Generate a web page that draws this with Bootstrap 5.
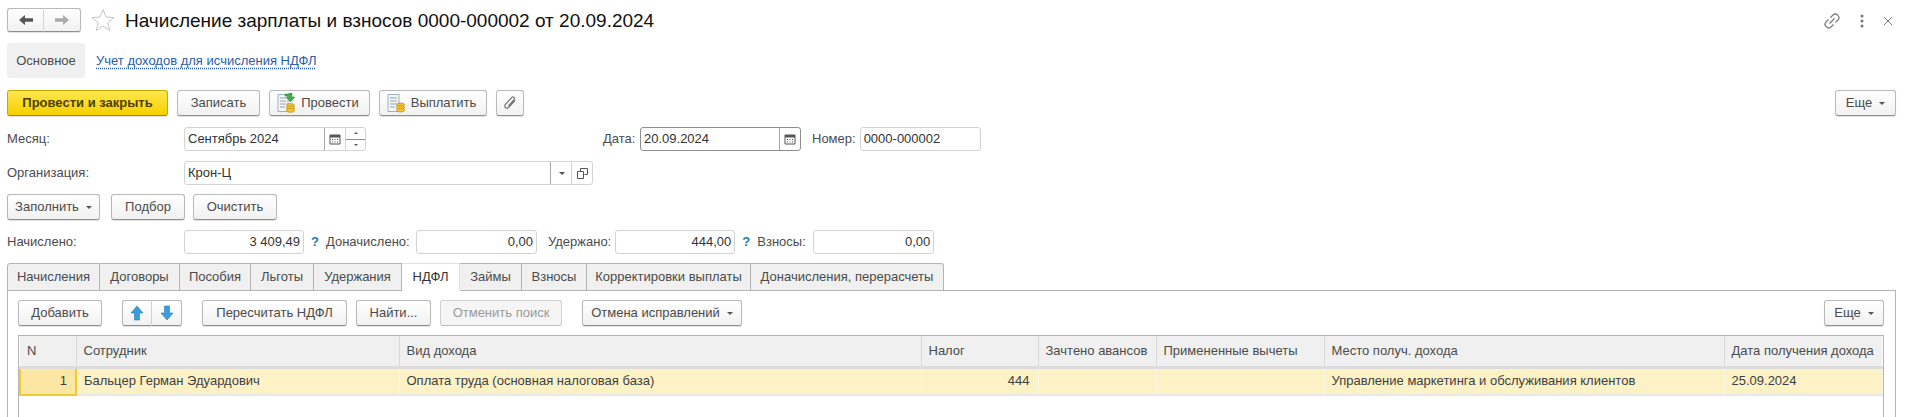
<!DOCTYPE html>
<html lang="ru">
<head>
    <meta charset="UTF-8">
    <title>Начисление зарплаты и взносов</title>
    <link href="https://cdn.jsdelivr.net/npm/bootstrap@5.3.0/dist/css/bootstrap.min.css" rel="stylesheet">
    <style>
        html, body { height: 417px; overflow: hidden; }
        body { background: #fff; color: #4b4b4b; font: 13px/16px "Liberation Sans", Arial, sans-serif; padding: 0 12px 0 7px; }

        /* header */
        .doc-head { height: 43px; padding-top: 8px; align-items: flex-start; }
        .doc-title { font-size: 19px; line-height: 26px; color: #111; margin: 0 0 0 10px; font-weight: 400; }
        .head-tools { margin-left: auto; gap: 19px; padding-top: 4px; margin-right: 3px; }
        .nav-pair { width: 74px; height: 24px; }
        .nav-pair .btn-1c { width: 37px; height: 24px; padding: 0; }
        .nav-pair .btn-1c:first-child { border-radius: 3px 0 0 3px; border-right-color: #d4d4d4; }
        .nav-pair .btn-1c:last-child { border-radius: 0 3px 3px 0; border-left: 0; }
        .star-ico { margin: 0 0 0 10px; }

        /* section links */
        .sect-nav { height: 35px; align-items: center; gap: 11px; }
        .sect-cur { background: #f0f0f0; width: 78px; height: 35px; border-radius: 3px; color: #4b4b4b; text-align: center; line-height: 35px; }
        .sect-link { color: #2a5ea6; text-decoration: underline dotted; text-underline-offset: 3px; }

        /* buttons */
        .btn-1c { --bs-btn-padding-x: 0; --bs-btn-padding-y: 0; --bs-btn-font-size: 13px; --bs-btn-line-height: 16px; --bs-btn-color: #4b4b4b; --bs-btn-border-radius: 3px;
            height: 26px; background: linear-gradient(#fff, #f1f1f1); border: 1px solid #b9b9b9; border-bottom-color: #8e8e8e; box-shadow: 0 1px 1px rgba(0,0,0,.12);
            display: inline-flex; align-items: center; justify-content: center; gap: 6px; flex: none; }
        .btn-1c:disabled { --bs-btn-disabled-color: #9a9a9a; --bs-btn-disabled-border-color: #cfcfcf; opacity: 1; border-bottom-color: #bdbdbd; background: #f5f5f5; box-shadow: none; color: #9a9a9a; }
        .btn-main { background: linear-gradient(#fde74c, #f7cf00); border-color: #c9a800; border-bottom-color: #a58a00; font-weight: 700; color: #4a3f00; }
        .btn-ico { gap: 5px; padding-right: 4px; }
        .caret-1c { width: 0; height: 0; border: 3px solid transparent; border-top: 3px solid #555; border-bottom: 0; margin-left: 1px; }
        .tools-main { margin-top: 12px; gap: 9px; }
        .w-161 { width: 161px; } .w-83 { width: 83px; } .w-101 { width: 101px; } .w-108 { width: 108px; } .w-28 { width: 28px; }
        .w-61 { width: 61px; } .w-93 { width: 93px; } .w-74 { width: 74px; } .w-84 { width: 84px; } .w-60 { width: 60px; }
        .w-145 { width: 145px; } .w-find { width: 75px; } .w-122 { width: 122px; } .w-160 { width: 160px; }
        .ms-auto-1c { margin-left: auto; }
        .ms-11 { margin-left: 11px; }

        /* form rows */
        .form-line { align-items: center; height: 24px; }
        .mt-11 { margin-top: 11px; } .mt-10 { margin-top: 10px; }
        .lbl { flex: none; }
        .lbl-main { width: 177px; }
        .lbl-date { margin-left: 237px; width: 37px; }
        .lbl-add { width: 90px; }
        .lbl-fee { width: 56px; }
        .fld { height: 24px; border: 1px solid #d3d3d3; border-radius: 3px; background: #fff; display: flex; align-items: stretch; flex: none; color: #333; }
        .fld-focus { border-color: #8f8f8f; }
        .fld-text { flex: 1; padding: 3px 3px; line-height: 16px; white-space: nowrap; }
        .fld-num { text-align: right; padding-right: 3px; }
        .fld-btn { width: 21px; border-left: 1px solid #a6a6a6; display: flex; align-items: center; justify-content: center; }
        .fld-btn-soft { border-left-color: #d3d3d3; }
        .fld-spin { width: 20px; border-left: 1px solid #d3d3d3; display: flex; flex-direction: column; }
        .fld-spin span { flex: 1; display: flex; align-items: center; justify-content: center; }
        .fld-spin span:first-child { border-bottom: 1px solid #8f8f8f; }
        .tri-up, .tri-dn { width: 0; height: 0; border: 2px solid transparent; }
        .tri-up { border-bottom: 2px solid #555; border-top: 0; }
        .tri-dn { border-top: 2px solid #555; border-bottom: 0; }
        .hint-q { color: #1f78b4; font-weight: 700; width: 22px; text-align: center; flex: none; }
        .w-182 { width: 182px; } .w-161f { width: 161px; } .w-121 { width: 121px; } .w-409 { width: 409px; } .w-120 { width: 120px; }
        .fill-bar { height: 26px; margin-top: 9px; }
        .fill-last { margin-left: 8px; }

        /* tabs */
        .tabs-1c { margin-top: 9px; height: 28px; border-bottom: 0; flex-wrap: nowrap; position: relative; z-index: 1; }
        .tabs-1c .nav-link { height: 28px; padding: 5px 0 0; text-align: center; color: #4b4b4b; background: #f0f0f0; border: 1px solid #b4b4b4; border-left: 0; border-bottom: 1px solid #b4b4b4; border-radius: 0; margin: 0; font-size: 13px; line-height: 16px; }
        .tabs-1c .nav-item:first-child .nav-link { border-left: 1px solid #b4b4b4; border-top-left-radius: 3px; }
        .tabs-1c .nav-item:last-child .nav-link { border-top-right-radius: 3px; }
        .tabs-1c .nav-link.active { background: #fff; border-bottom-color: #fff; color: #333; }
        .tw-93 { width: 93px; } .tw-80 { width: 80px; } .tw-71 { width: 71px; } .tw-63 { width: 63px; } .tw-88 { width: 88px; } .tw-58 { width: 58px; } .tw-62 { width: 62px; } .tw-65 { width: 65px; } .tw-164 { width: 164px; } .tw-193 { width: 193px; }

        .tab-panel { border: 1px solid #b4b4b4; border-bottom: 0; margin-top: -1px; height: 127px; padding: 9px 11px 0 10px; overflow: hidden; }
        .tools-grid { gap: 9px; align-items: flex-start; }
        .arrow-pair .btn-1c { width: 30px; }
        .arrow-pair .btn-1c:first-child { border-radius: 3px 0 0 3px; border-right-color: #d4d4d4; }
        .arrow-pair .btn-1c:last-child { border-radius: 0 3px 3px 0; border-left: 0; }

        /* table */
        .grid-box { border: 1px solid #b4b4b4; border-bottom: 0; margin-top: 9px; height: 82px; }
        .grid-tbl { --bs-table-bg: transparent; table-layout: fixed; width: 100%; margin: 0; color: #4b4b4b; font-size: 13px; }
        .grid-tbl th, .grid-tbl td { padding: 0 7px; font-weight: 400; white-space: nowrap; overflow: hidden; vertical-align: middle; border: 0; border-right: 1px solid #fff; line-height: 16px; }
        .grid-tbl th { background: #f0f0f0; height: 31px; border-bottom: 3px solid #dcdcdc; }
        .grid-tbl th:not(:last-child) { border-right: 1px solid #d8d8d8; }
        .grid-tbl td { background: #fdf1c6; height: 28px; border-right-color: #fbf8e8; border-bottom: 2px solid #e8e8e8; color: #3f3f3f; }
        .grid-tbl td.cell-cur { background: #fbe7a3; border: 2px solid #f2c92f; text-align: right; padding-right: 8px; }
        .grid-tbl td.cell-num { text-align: right; padding-right: 8px; }
        .col-n { width: 56px; } .col-emp { width: 323px; } .col-kind { width: 522px; } .col-tax { width: 117px; }
        .col-adv { width: 118px; } .col-ded { width: 168px; } .col-place { width: 400px; }
    </style>
</head>
<body>
    <!-- Header -->
    <div class="d-flex doc-head">
        <div class="d-flex nav-pair">
            <button type="button" class="btn btn-1c">
                <svg width="16" height="12" viewBox="0 0 16 12"><path d="M1 6l6-5v3.300h8v3.400H7V11z" fill="#555"/></svg>
            </button>
            <button type="button" class="btn btn-1c">
                <svg width="16" height="12" viewBox="0 0 16 12"><path d="M15 6L9 1v3.300H1v3.400h8V11z" fill="#aaa"/></svg>
            </button>
        </div>
        <svg class="star-ico" width="24" height="24" viewBox="0 0 24 24"><path d="M12 1.500l3 7.500 8 .6-6.200 5.100 2 7.800L12 18.200l-6.800 4.300 2-7.800L1 9.600l8-.6z" fill="#fff" stroke="#c6c6c6"/></svg>
        <h1 class="doc-title">Начисление зарплаты и взносов 0000-000002 от 20.09.2024</h1>
        <div class="d-flex align-items-center head-tools">
            <svg width="18" height="18" viewBox="0 0 18 18" fill="none" stroke="#777" stroke-width="1.300"><path d="M7.500 5.500l2.600-2.600a3 3 0 0 1 4.300 0l.7.700a3 3 0 0 1 0 4.300l-2.600 2.600"/><path d="M10.500 12.500l-2.600 2.600a3 3 0 0 1-4.300 0l-.7-.7a3 3 0 0 1 0-4.300l2.600-2.600"/><path d="M6.500 11.500l5-5"/></svg>
            <svg width="4" height="14" viewBox="0 0 4 14" fill="#777"><circle cx="2" cy="2" r="1.500"/><circle cx="2" cy="7" r="1.500"/><circle cx="2" cy="12" r="1.500"/></svg>
            <svg width="10" height="10" viewBox="0 0 10 10" stroke="#777" fill="none"><path d="M1 1l8 8M9 1l-8 8"/></svg>
        </div>
    </div>

    <!-- Sections -->
    <nav class="d-flex sect-nav">
        <div class="sect-cur">Основное</div>
        <a class="sect-link" href="#">Учет доходов для исчисления НДФЛ</a>
    </nav>

    <!-- Command bar -->
    <div class="d-flex tools-main">
        <button type="button" class="btn btn-1c btn-main w-161">Провести и закрыть</button>
        <button type="button" class="btn btn-1c w-83">Записать</button>
        <button type="button" class="btn btn-1c btn-ico w-101">
            <svg width="20" height="20" viewBox="0 0 20 20"><path d="M2 1.500h10v17H2z" fill="#f4f7f8" stroke="#9fb0b8"/><path d="M4 5h6M4 8h6M4 11h6M4 14h5" stroke="#8fa3ad"/><path d="M9 1h4V0h3v4h3l-4.500 5L10 4h3V3H9z" fill="#3fae49" stroke="#2c8a35" stroke-width=".5"/><ellipse cx="14.500" cy="12.500" rx="4" ry="2" fill="#f4c430" stroke="#b98a10" stroke-width=".7"/><ellipse cx="14.500" cy="15" rx="4" ry="2" fill="#f4c430" stroke="#b98a10" stroke-width=".7"/><ellipse cx="14.500" cy="17.300" rx="4" ry="2" fill="#f4c430" stroke="#b98a10" stroke-width=".7"/></svg>
            Провести
        </button>
        <button type="button" class="btn btn-1c btn-ico w-108">
            <svg width="20" height="20" viewBox="0 0 20 20"><path d="M2 1.500h11v17H2z" fill="#f4f7f8" stroke="#9fb0b8"/><path d="M4 5h7M4 8h7M4 11h7M4 14h5" stroke="#8fa3ad"/><ellipse cx="14.500" cy="12" rx="4" ry="2" fill="#f4c430" stroke="#b98a10" stroke-width=".7"/><ellipse cx="14.500" cy="14.500" rx="4" ry="2" fill="#f4c430" stroke="#b98a10" stroke-width=".7"/><ellipse cx="14.500" cy="17" rx="4" ry="2" fill="#f4c430" stroke="#b98a10" stroke-width=".7"/></svg>
            Выплатить
        </button>
        <button type="button" class="btn btn-1c w-28" aria-label="Файлы">
            <svg width="14" height="16" viewBox="0 0 14 16" fill="none" stroke="#777" stroke-width="1.200"><path d="M12 5.500l-6.500 7a2.200 2.200 0 0 1-3.200-3l6.700-7.200a1.500 1.500 0 0 1 2.200 2L5.500 11"/></svg>
        </button>
        <button type="button" class="btn btn-1c w-61 ms-auto-1c">Еще <span class="caret-1c"></span></button>
    </div>

    <!-- Month / date / number -->
    <div class="d-flex form-line mt-11">
        <span class="lbl lbl-main">Месяц:</span>
        <div class="fld w-182">
            <div class="fld-text">Сентябрь 2024</div>
            <div class="fld-btn">
                <svg width="12" height="12" viewBox="0 0 12 12"><path d="M1 2h10v9H1z" fill="#fff" stroke="#555"/><path d="M1 2h10v2.500H1z" fill="#555"/><path d="M3 6h1v1H3zM5.500 6h1v1h-1zM8 6h1v1H8zM3 8.500h1v1H3zM5.500 8.500h1v1h-1zM8 8.500h1v1H8z" fill="#555"/></svg>
            </div>
            <div class="fld-spin"><span><i class="tri-up"></i></span><span><i class="tri-dn"></i></span></div>
        </div>
        <span class="lbl lbl-date">Дата:</span>
        <div class="fld fld-focus w-161f">
            <div class="fld-text">20.09.2024</div>
            <div class="fld-btn">
                <svg width="12" height="12" viewBox="0 0 12 12"><path d="M1 2h10v9H1z" fill="#fff" stroke="#555"/><path d="M1 2h10v2.500H1z" fill="#555"/><path d="M3 6h1v1H3zM5.500 6h1v1h-1zM8 6h1v1H8zM3 8.500h1v1H3zM5.500 8.500h1v1h-1zM8 8.500h1v1H8z" fill="#555"/></svg>
            </div>
        </div>
        <span class="lbl ms-11">Номер:</span>
        <div class="fld w-121 ms-1"><div class="fld-text">0000-000002</div></div>
    </div>

    <!-- Organisation -->
    <div class="d-flex form-line mt-10">
        <span class="lbl lbl-main">Организация:</span>
        <div class="fld w-409">
            <div class="fld-text">Крон-Ц</div>
            <div class="fld-btn"><span class="caret-1c"></span></div>
            <div class="fld-btn fld-btn-soft">
                <svg width="11" height="11" viewBox="0 0 11 11" fill="none" stroke="#555"><path d="M3.500 3.500v-3h7v6h-3"/><path d="M.5 3.500h6v7h-6z" fill="#fff"/></svg>
            </div>
        </div>
    </div>

    <!-- Fill buttons -->
    <div class="d-flex fill-bar">
        <button type="button" class="btn btn-1c w-93">Заполнить <span class="caret-1c"></span></button>
        <button type="button" class="btn btn-1c w-74 ms-11">Подбор</button>
        <button type="button" class="btn btn-1c w-84 fill-last">Очистить</button>
    </div>

    <!-- Totals -->
    <div class="d-flex form-line mt-10">
        <span class="lbl lbl-main">Начислено:</span>
        <div class="fld w-120"><div class="fld-text fld-num">3 409,49</div></div>
        <span class="hint-q">?</span>
        <span class="lbl lbl-add">Доначислено:</span>
        <div class="fld w-121"><div class="fld-text fld-num">0,00</div></div>
        <span class="lbl ms-11">Удержано:</span>
        <div class="fld w-120 ms-1"><div class="fld-text fld-num">444,00</div></div>
        <span class="hint-q">?</span>
        <span class="lbl lbl-fee">Взносы:</span>
        <div class="fld w-121"><div class="fld-text fld-num">0,00</div></div>
    </div>

    <!-- Tabs -->
    <ul class="nav nav-tabs tabs-1c">
        <li class="nav-item"><a class="nav-link tw-93" href="#">Начисления</a></li>
        <li class="nav-item"><a class="nav-link tw-80" href="#">Договоры</a></li>
        <li class="nav-item"><a class="nav-link tw-71" href="#">Пособия</a></li>
        <li class="nav-item"><a class="nav-link tw-63" href="#">Льготы</a></li>
        <li class="nav-item"><a class="nav-link tw-88" href="#">Удержания</a></li>
        <li class="nav-item"><a class="nav-link tw-58 active" href="#">НДФЛ</a></li>
        <li class="nav-item"><a class="nav-link tw-62" href="#">Займы</a></li>
        <li class="nav-item"><a class="nav-link tw-65" href="#">Взносы</a></li>
        <li class="nav-item"><a class="nav-link tw-164" href="#">Корректировки выплаты</a></li>
        <li class="nav-item"><a class="nav-link tw-193" href="#">Доначисления, перерасчеты</a></li>
    </ul>

    <div class="tab-panel">
        <div class="d-flex tools-grid">
            <button type="button" class="btn btn-1c w-84">Добавить</button>
            <div class="d-flex arrow-pair ms-11">
                <button type="button" class="btn btn-1c" aria-label="Вверх">
                    <svg width="14" height="16" viewBox="0 0 14 16"><path d="M7 1l6 7H9.500v7h-5V8H1z" fill="#3d9bd8" stroke="#2a7db5" stroke-width=".6"/></svg>
                </button>
                <button type="button" class="btn btn-1c" aria-label="Вниз">
                    <svg width="14" height="16" viewBox="0 0 14 16"><path d="M7 15L1 8h3.500V1h5v7H13z" fill="#3d9bd8" stroke="#2a7db5" stroke-width=".6"/></svg>
                </button>
            </div>
            <button type="button" class="btn btn-1c w-145 ms-11">Пересчитать НДФЛ</button>
            <button type="button" class="btn btn-1c w-find">Найти...</button>
            <button type="button" class="btn btn-1c w-122" disabled>Отменить поиск</button>
            <button type="button" class="btn btn-1c w-160 ms-11">Отмена исправлений <span class="caret-1c"></span></button>
            <button type="button" class="btn btn-1c w-60 ms-auto-1c">Еще <span class="caret-1c"></span></button>
        </div>
        <div class="grid-box">
            <table class="table grid-tbl">
                <colgroup>
                    <col class="col-n"><col class="col-emp"><col class="col-kind"><col class="col-tax"><col class="col-adv"><col class="col-ded"><col class="col-place"><col>
                </colgroup>
                <thead>
                    <tr>
                        <th>N</th>
                        <th>Сотрудник</th>
                        <th>Вид дохода</th>
                        <th>Налог</th>
                        <th>Зачтено авансов</th>
                        <th>Примененные вычеты</th>
                        <th>Место получ. дохода</th>
                        <th>Дата получения дохода</th>
                    </tr>
                </thead>
                <tbody>
                    <tr>
                        <td class="cell-cur">1</td>
                        <td>Бальцер Герман Эдуардович</td>
                        <td>Оплата труда (основная налоговая база)</td>
                        <td class="cell-num">444</td>
                        <td></td>
                        <td></td>
                        <td>Управление маркетинга и обслуживания клиентов</td>
                        <td>25.09.2024</td>
                    </tr>
                </tbody>
            </table>
        </div>
    </div>
</body>
</html>
